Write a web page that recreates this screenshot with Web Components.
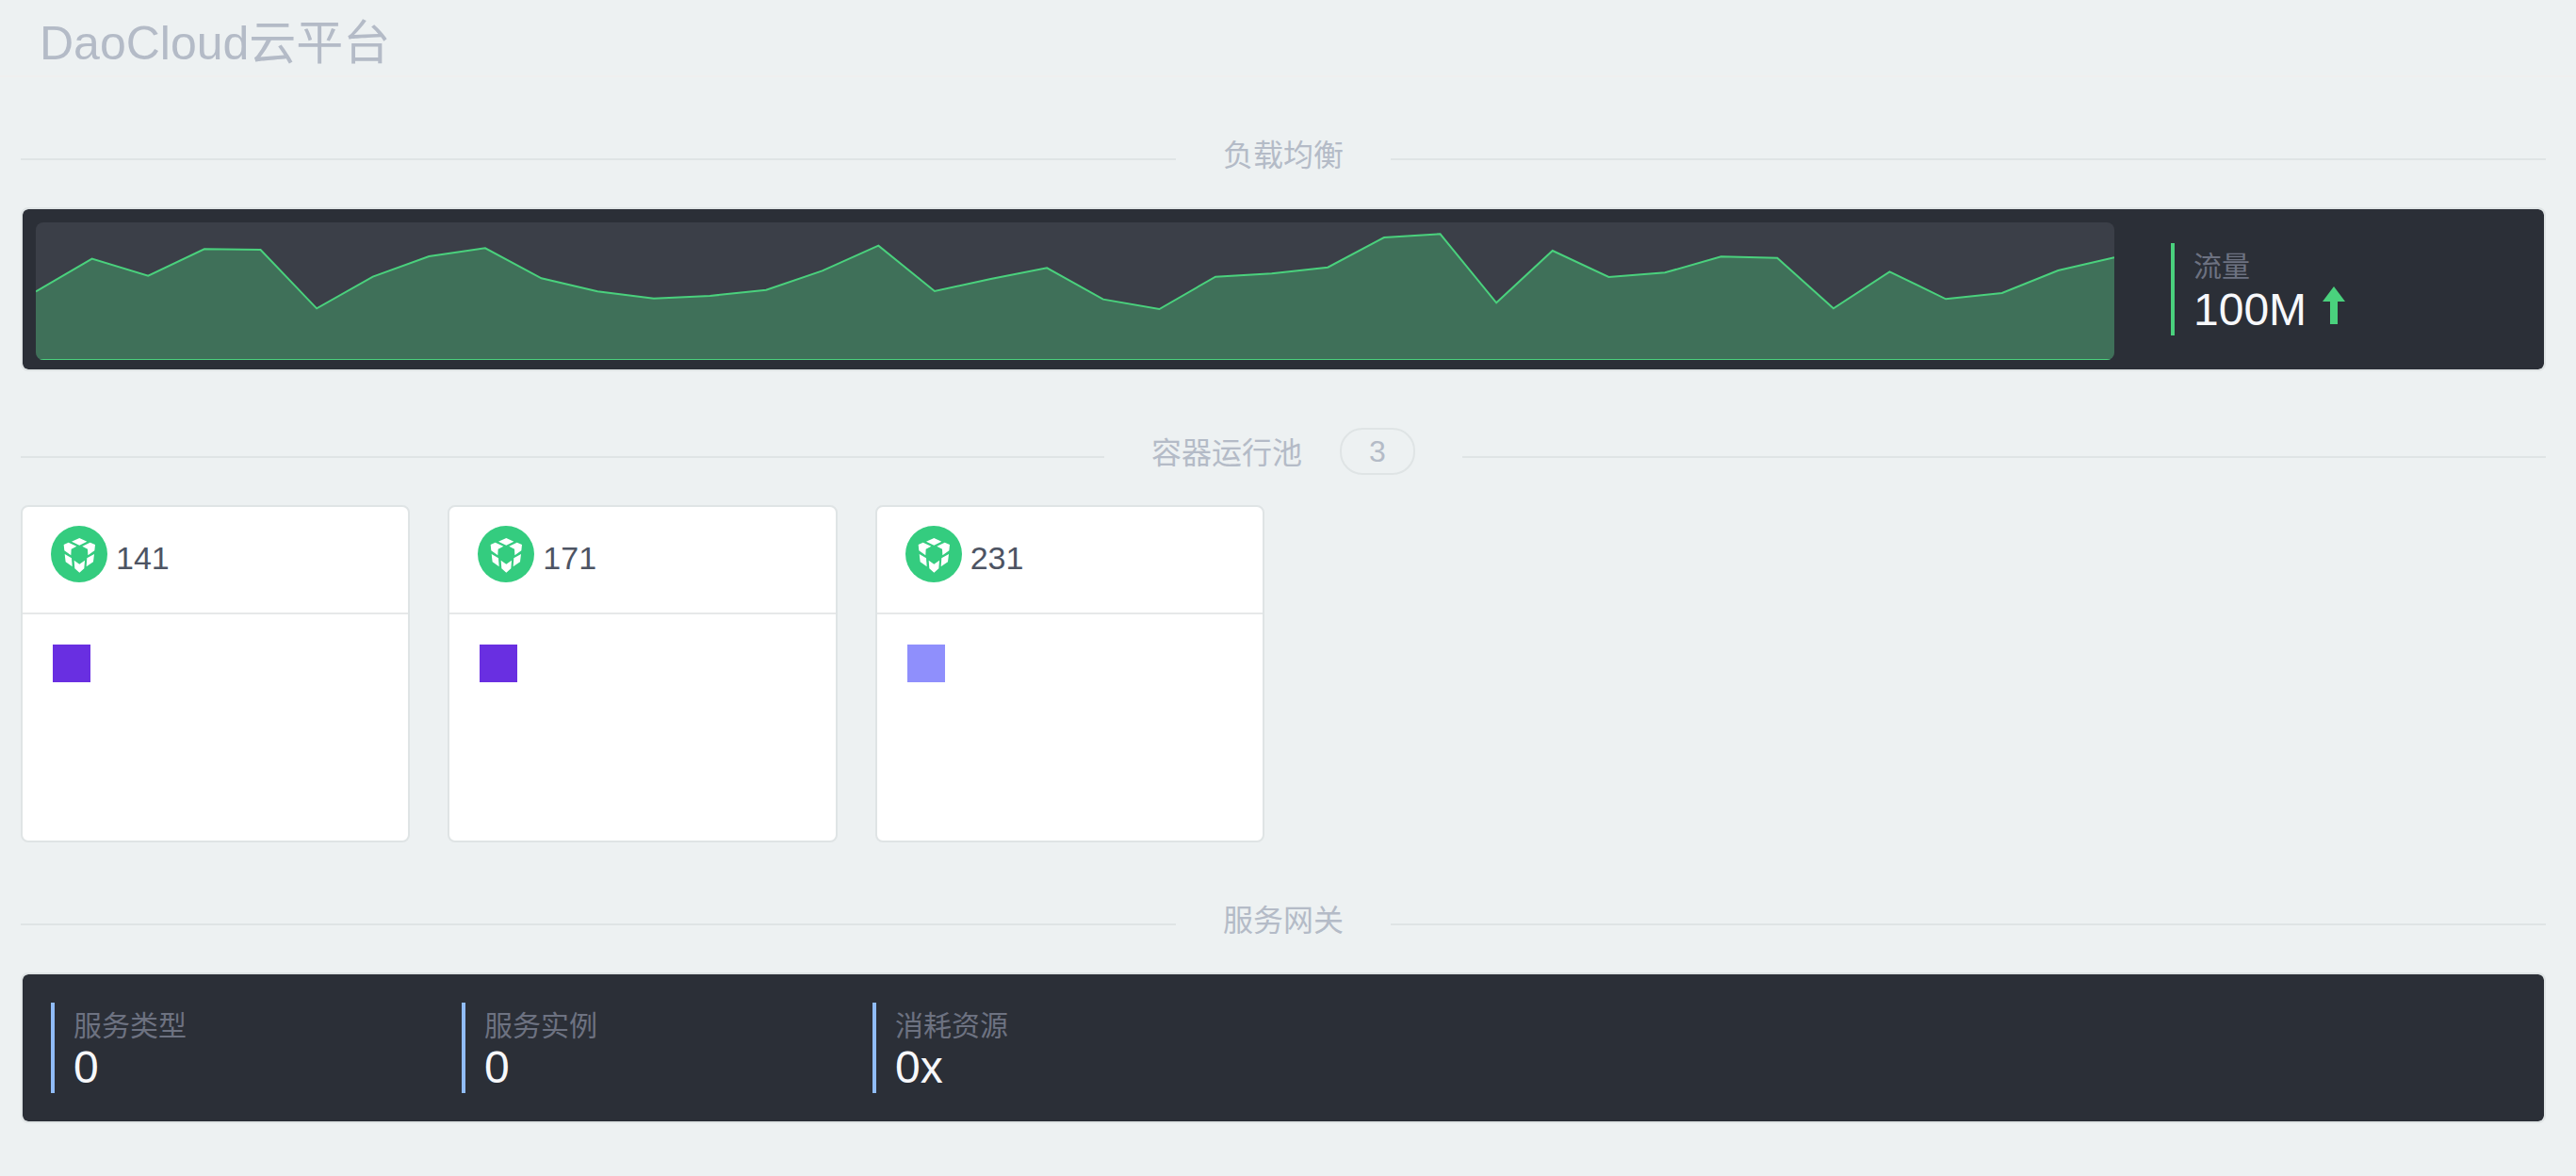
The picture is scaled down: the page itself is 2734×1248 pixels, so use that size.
<!DOCTYPE html>
<html lang="zh-CN">
<head>
<meta charset="utf-8">
<title>DaoCloud云平台</title>
<style>
  body {
    margin: 0;
    background: #edf1f2;
    font-family: "Liberation Sans", "Noto Sans CJK SC", sans-serif;
    font-weight: 400;
    color: #b4bbc7;
    --line: #dfe4e5;
    --dark: #2b2f37;
    --green: #4ad17d;
    --blue: #90bcf7;
  }
</style>
</head>
<body>
<dao-header>DaoCloud云平台</dao-header>
<dao-main>
  <dao-section heading="负载均衡">
    <dao-panel>
      <traffic-chart></traffic-chart>
      <dao-stat class="traffic" label="流量" value="100M" trend="up"></dao-stat>
    </dao-panel>
  </dao-section>
  <dao-section heading="容器运行池" count="3">
    <pool-grid>
      <pool-card name="141" tone="deep"></pool-card>
      <pool-card name="171" tone="deep"></pool-card>
      <pool-card name="231" tone="soft"></pool-card>
    </pool-grid>
  </dao-section>
  <dao-section heading="服务网关">
    <dao-panel columns>
      <dao-stat label="服务类型" value="0"></dao-stat>
      <dao-stat label="服务实例" value="0"></dao-stat>
      <dao-stat label="消耗资源" value="0x"></dao-stat>
    </dao-panel>
  </dao-section>
</dao-main>

<script>
  class BaseElement extends HTMLElement {
    connectedCallback() {
      if (this.shadowRoot) return;
      this.attachShadow({ mode: "open" }).innerHTML = this.render();
    }
  }

  customElements.define("dao-header", class extends BaseElement {
    render() {
      return `<style>
        :host { display: block; border-bottom: 2px solid #f0efef; padding: 12px 42px 0; }
        h1 { margin: 0; font-size: 50px; line-height: 68px; font-weight: inherit; }
      </style><h1><slot></slot></h1>`;
    }
  });

  customElements.define("dao-main", class extends BaseElement {
    render() {
      return `<style>
        :host { display: flex; flex-direction: column; gap: 56px; padding: 56px 32px 52px 22px; }
      </style><slot></slot>`;
    }
  });

  customElements.define("dao-section", class extends BaseElement {
    render() {
      const count = this.getAttribute("count");
      return `<style>
        :host { display: block; }
        header { display: flex; align-items: center; gap: 50px; height: 50px; margin-bottom: 32px; }
        header::before, header::after { content: ""; flex: 1; height: 2px; margin-top: 12px; background: var(--line); }
        .title { display: flex; align-items: center; gap: 40px; font-size: 32px; line-height: 50px; }
        h2 { margin: 0; padding-top: 4px; font: inherit; }
        .count { box-sizing: border-box; width: 80px; height: 50px; border: 2px solid var(--line);
          border-radius: 24px; line-height: 46px; text-align: center; }
      </style>
      <header><div class="title"><h2>${this.getAttribute("heading")}</h2>${count ? `<span class="count">${count}</span>` : ""}</div></header>
      <slot></slot>`;
    }
  });

  customElements.define("dao-panel", class extends BaseElement {
    render() {
      return `<style>
        :host { display: flex; gap: 60px; margin-bottom: 4px; padding: 14px 14px 10px; border: 2px solid var(--line);
          border-radius: 8px; background: var(--dark) padding-box; }
        :host([columns]) { display: grid; grid-template-columns: repeat(6, 1fr); gap: 0; padding: 30px; }
        ::slotted(.traffic) { width: 382px; margin-top: 22px; }
      </style><slot></slot>`;
    }
  });

  customElements.define("traffic-chart", class extends BaseElement {
    render() {
      // Distance from the top of the plot, in thirds of a pixel, one sample per step
      const samples = [220,116,170,85,87,274,173,108,82,178,220,242,234,215,154,74,219,180,145,
        245,276,173,163,143,48,37,256,90,174,160,109,113,274,157,244,225,153,112];
      const line = samples.map((y, x) => `${x},${y}`).join(" ");
      return `<style>
        :host { display: block; flex: 1; height: 146px; border-radius: 8px; overflow: hidden; background: #3b3f48; }
        svg { display: block; width: 100%; height: 100%; }
        .area { fill: #3f7059; }
        .line, .base { fill: none; stroke: var(--green); stroke-width: 2; vector-effect: non-scaling-stroke; }
      </style>
      <svg viewBox="0 0 37 438" preserveAspectRatio="none" role="img" aria-label="流量">
        <polygon class="area" points="0,438 ${line} 37,438"/>
        <polyline class="line" points="${line}"/>
        <line class="base" x1="0" y1="438" x2="37" y2="438"/>
      </svg>`;
    }
  });

  customElements.define("dao-stat", class extends BaseElement {
    render() {
      const up = this.getAttribute("trend") === "up";
      return `<style>
        :host { display: block; }
        dl { margin: 0; height: 96px; border-left: 4px solid var(--blue); padding-left: 20px; }
        dl.up { height: 98px; border-color: var(--green); }
        dt { font-size: 30px; line-height: 50px; color: #6d7281; }
        dd { margin: 0; display: flex; align-items: flex-start; gap: 17px; font-size: 48px; line-height: 38px; color: #f7f8fb; }
        .up dd { line-height: 42px; }
        svg { width: 24px; height: 40px; margin-top: -4px; fill: var(--green); }
      </style>
      <dl class="${up ? "up" : ""}"><dt>${this.getAttribute("label")}</dt>
      <dd>${this.getAttribute("value")}${up ? `<svg viewBox="0 0 24 40" aria-hidden="true"><path d="M12 0L24 16H16V40H8V16H0Z"/></svg>` : ""}</dd></dl>`;
    }
  });

  customElements.define("pool-grid", class extends BaseElement {
    render() {
      return `<style>
        :host { display: grid; grid-template-columns: repeat(6, 1fr); gap: 40px; }
      </style><slot></slot>`;
    }
  });

  customElements.define("cube-logo", class extends BaseElement {
    render() {
      return `<style>
        :host { display: block; width: 60px; height: 60px; }
        svg { display: block; }
      </style>
      <svg width="60" height="60" viewBox="0 0 180 180" aria-hidden="true">
        <circle cx="90" cy="90" r="90" fill="#34cc7f"/>
        <g fill="#fff">
          <path d="M66 50L91 39L115 50L91 62Z"/>
          <path d="M41 60L56 53L82 65L65 74L64 94L43 79Z"/>
          <path d="M141 60L125 53L100 65L117 74L118 94L139 79Z"/>
          <path d="M44 90L66 103L68 130L47 115Z"/>
          <path d="M138 90L115 103L113 130L135 115Z"/>
          <path d="M74 110L91 122L108 110L106 136L91 149L76 136Z"/>
        </g>
      </svg>`;
    }
  });

  customElements.define("pool-card", class extends BaseElement {
    render() {
      return `<style>
        :host { display: block; border: 2px solid var(--line); border-radius: 8px; background: #fff; }
        header { display: flex; gap: 9px; height: 92px; padding: 20px 30px 0; border-bottom: 2px solid #e6e8e9; }
        h3 { margin: 0; padding-top: 4px; font-size: 34px; line-height: 60px; font-weight: inherit; color: #4d5463; }
        .body { min-height: 176px; padding: 32px; }
        .box { width: 40px; height: 40px; background: #692fe1; }
        :host([tone="soft"]) .box { background: #8f8ffc; }
      </style>
      <header><cube-logo></cube-logo><h3>${this.getAttribute("name")}</h3></header>
      <div class="body"><div class="box"></div></div>`;
    }
  });
</script>
</body>
</html>
